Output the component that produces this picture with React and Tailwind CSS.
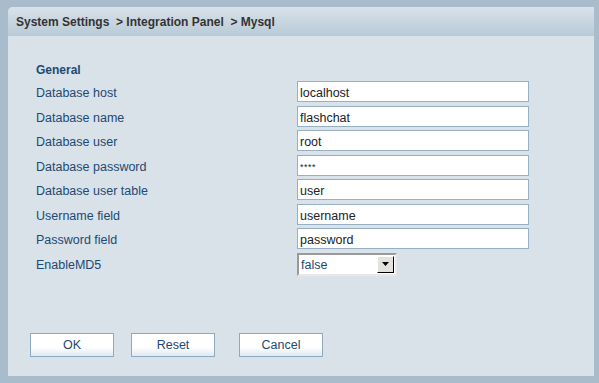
import { useState } from "react";

const fields = [
    { label: "Database host", value: "localhost" },
    { label: "Database name", value: "flashchat" },
    { label: "Database user", value: "root" },
    { label: "Database password", value: "****" },
    { label: "Database user table", value: "user" },
    { label: "Username field", value: "username" },
    { label: "Password field", value: "password" },
];

const Button = ({ children }) => (
    <button className="w-[84px] h-[24px] border border-[#8fa9c0] bg-gradient-to-b from-white from-60% to-[#dfe8f0] text-[12.5px] text-[#1d4a72] leading-none">
        {children}
    </button>
);

const App = () => {
    const [values, setValues] = useState(fields.map((f) => f.value));

    return (
        <div className="w-[599px] h-[383px] bg-[#a9bccc] pt-[7px] pl-[8px] pr-[5px] pb-[7px] font-['Liberation_Sans',Arial,sans-serif]">
            <div className="h-full flex flex-col bg-[#d9e1e9] rounded-tl-[5px] overflow-hidden">
                <div className="h-[29px] flex items-center pl-[8px] bg-gradient-to-b from-[#d9e2e9] to-[#b8cad7] text-[12px] font-bold text-[#333] whitespace-pre">
                    System Settings  &gt; Integration Panel  &gt; Mysql
                </div>

                <div className="pl-[28px] pt-[27px]">
                    <div className="text-[12px] font-bold text-[#1d4a72] leading-[14px] mb-[4px]">General</div>
                    <div className="grid grid-cols-[261px_232px] gap-y-[3.5px] items-start">
                        {fields.map((f, i) => (
                            <div key={f.label} className="contents">
                                <span className="h-[21px] text-[12.5px] leading-[25px] text-[#1d4a72]">{f.label}</span>
                                <input
                                    type="text"
                                    value={values[i]}
                                    onChange={(e) => {
                                        const next = [...values];
                                        next[i] = e.target.value;
                                        setValues(next);
                                    }}
                                    className={`h-[21px] border border-[#98b0c4] bg-white px-[2px] pt-[3px] text-[#222] outline-none ${
                                        f.label === "Database password" ? "text-[9px] tracking-[0.5px]" : "text-[12.5px]"
                                    }`}
                                />
                            </div>
                        ))}
                        <span className="h-[23px] text-[12.5px] leading-[25px] text-[#1d4a72]">EnableMD5</span>
                        <div className="w-[100px] h-[23px] flex border-2 border-t-[#9a9a9a] border-l-[#9a9a9a] border-b-[#e8e8e8] border-r-[#e8e8e8] bg-white">
                            <span className="flex-1 pl-[2px] text-[12.5px] text-[#1d4a72] leading-[20px]">false</span>
                            <div className="w-[17px] h-[17px] mt-[1px] mr-[1px] flex items-center justify-center bg-[#e4e2de] border border-t-white border-l-white border-b-black border-r-black">
                                <svg width="7" height="4" viewBox="0 0 7 4">
                                    <path d="M0 0h7L3.5 4z" fill="#000" />
                                </svg>
                            </div>
                        </div>
                    </div>
                </div>

                <div className="mt-auto mb-[19px] pl-[22px] flex">
                    <Button>OK</Button>
                    <div className="w-[17px]" />
                    <Button>Reset</Button>
                    <div className="w-[24px]" />
                    <Button>Cancel</Button>
                </div>
            </div>
        </div>
    );
};

export default App;
